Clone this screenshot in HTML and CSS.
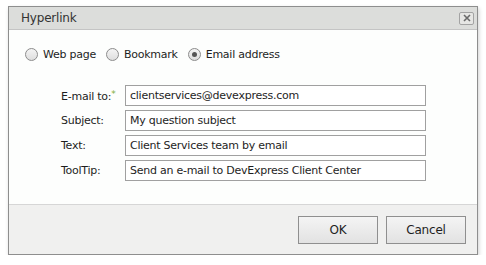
FILE: index.html
```html
<!DOCTYPE html>
<html>
<head>
<meta charset="utf-8">
<link rel="stylesheet" href="styles.css">
</head>
<body>
<div class="dialog">
  <div class="header">
    <span class="title">Hyperlink</span>
    <span class="close"><svg width="8" height="8" viewBox="0 0 8 8"><path d="M1 1L7 7M7 1L1 7" stroke="#6a6a6a" stroke-width="1.6"/></svg></span>
  </div>
  <div class="content">
    <div class="radios">
      <label class="radio"><span class="circle"></span>Web page</label>
      <label class="radio"><span class="circle"></span>Bookmark</label>
      <label class="radio"><span class="circle checked"></span>Email address</label>
    </div>
    <div class="form">
      <span class="lbl">E-mail to:<span class="req">*</span></span>
      <div class="input">clientservices@devexpress.com</div>
      <span class="lbl">Subject:</span>
      <div class="input">My question subject</div>
      <span class="lbl">Text:</span>
      <div class="input">Client Services team by email</div>
      <span class="lbl">ToolTip:</span>
      <div class="input">Send an e-mail to DevExpress Client Center</div>
    </div>
  </div>
  <div class="footer">
    <button class="btn">OK</button>
    <button class="btn">Cancel</button>
  </div>
</div>
</body>
</html>
```
FILE: styles.css
```css
*, *::before, *::after {
  box-sizing: border-box;
}
html, body {
  margin: 0;
  padding: 0;
  background: #ffffff;
}
body {
  padding: 6px 8px 0 8px;
  font-family: "DejaVu Sans", Tahoma, sans-serif;
  font-size: 11px;
  color: #1e1e1e;
}
.dialog {
  width: 470px;
  height: 249px;
  border: 1px solid #8e8e8e;
  background: #fdfefd;
  box-shadow: 1px 2px 4px rgba(0,0,0,0.18);
  display: flex;
  flex-direction: column;
}
.header {
  height: 23px;
  flex: none;
  background: #dcdddb;
  border-bottom: 1px solid #c4c4c4;
  display: flex;
  align-items: center;
  justify-content: space-between;
  padding: 0 3px 0 12px;
}
.title {
  color: #333;
  font-size: 12px;
  letter-spacing: -0.2px;
}
.close {
  width: 15px;
  height: 13px;
  border: 1px solid #a3a3a3;
  border-radius: 2px;
  background: #e6e6e4;
  display: flex;
  align-items: center;
  justify-content: center;
}
.content {
  height: 175px;
  flex: none;
  padding: 18px 0 0 16px;
  border-bottom: 1px solid #d6d6d6;
}
.radios {
  display: flex;
  gap: 10px;
  height: 13px;
  align-items: center;
}
.radio {
  display: flex;
  align-items: center;
  gap: 5px;
  letter-spacing: -0.25px;
}
.circle {
  width: 13px;
  height: 13px;
  border: 1px solid #8c8c8c;
  border-radius: 50%;
  background: linear-gradient(#f4f4f4, #dedede);
  position: relative;
}
.circle.checked::after {
  content: "";
  position: absolute;
  left: 3px;
  top: 3px;
  width: 5px;
  height: 5px;
  border-radius: 50%;
  background: #555;
}
.form {
  margin: 24px 0 0 36px;
  display: grid;
  grid-template-columns: 64px 301px;
  row-gap: 4px;
  align-items: center;
}
.lbl {
  letter-spacing: -0.25px;
}
.req {
  color: #7fae3c;
  font-size: 9px;
  vertical-align: 3px;
}
.input {
  height: 21px;
  border: 1px solid #a0a0a0;
  background: #fff;
  padding: 0 4px;
  line-height: 19px;
  letter-spacing: -0.25px;
}
.footer {
  flex: 1;
  background: #f0f0ef;
  display: flex;
  justify-content: flex-end;
  align-items: flex-start;
  gap: 8px;
  padding: 11px 11px 0 0;
}
.btn {
  width: 80px;
  height: 28px;
  border: 1px solid #8f8f8f;
  background: linear-gradient(#f4f4f4, #e2e2e2);
  font-family: "DejaVu Sans", Tahoma, sans-serif;
  font-size: 12px;
  color: #1e1e1e;
  padding: 0;
  letter-spacing: -0.2px;
}
```
